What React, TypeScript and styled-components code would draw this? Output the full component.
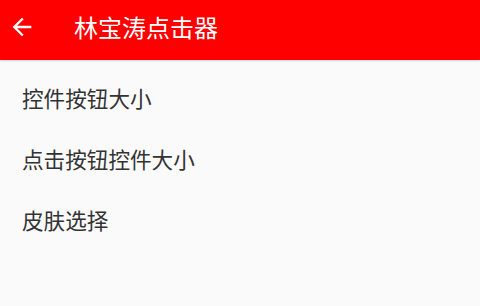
import React from 'react'
import styled, { createGlobalStyle } from 'styled-components'

const GlobalStyle = createGlobalStyle`
  html, body {
    margin: 0;
    padding: 0;
    background: #fafafa;
    font-family: "Noto Sans CJK SC", Roboto, "Noto Sans", sans-serif;
  }
`

const Screen = styled.div`
  width: 480px;
  height: 306px;
  background: #fafafa;
  display: flex;
  flex-direction: column;
  overflow: hidden;
`

const Toolbar = styled.div`
  height: 60px;
  background: #ff0000;
  display: flex;
  align-items: center;
  padding-bottom: 7px;
  box-sizing: border-box;
  box-shadow: 0 1px 2px rgba(0, 0, 0, 0.15);
  flex-shrink: 0;
`

const BackButton = styled.div`
  width: 28px;
  height: 28px;
  margin-left: 8px;
  display: flex;
  align-items: center;
  justify-content: center;
`

const Title = styled.div`
  margin-left: 38px;
  color: #ffffff;
  font-size: 24px;
  line-height: 28px;
  font-weight: 400;
`

const List = styled.div`
  display: flex;
  flex-direction: column;
  padding-top: 7px;
`

const Row = styled.div`
  height: 61px;
  display: flex;
  align-items: center;
  padding-left: 22px;
  color: #333333;
  font-size: 21.6px;
`

const items = ['控件按钮大小', '点击按钮控件大小', '皮肤选择']

export default function App() {
  return (
    <>
      <GlobalStyle />
      <Screen>
        <Toolbar>
          <BackButton>
            <svg width="28" height="28" viewBox="0 0 24 24" fill="#ffffff">
              <path d="M20 11H7.83l5.59-5.59L12 4l-8 8 8 8 1.41-1.41L7.83 13H20v-2z" />
            </svg>
          </BackButton>
          <Title>林宝涛点击器</Title>
        </Toolbar>
        <List>
          {items.map((t) => (
            <Row key={t}>{t}</Row>
          ))}
        </List>
      </Screen>
    </>
  )
}
